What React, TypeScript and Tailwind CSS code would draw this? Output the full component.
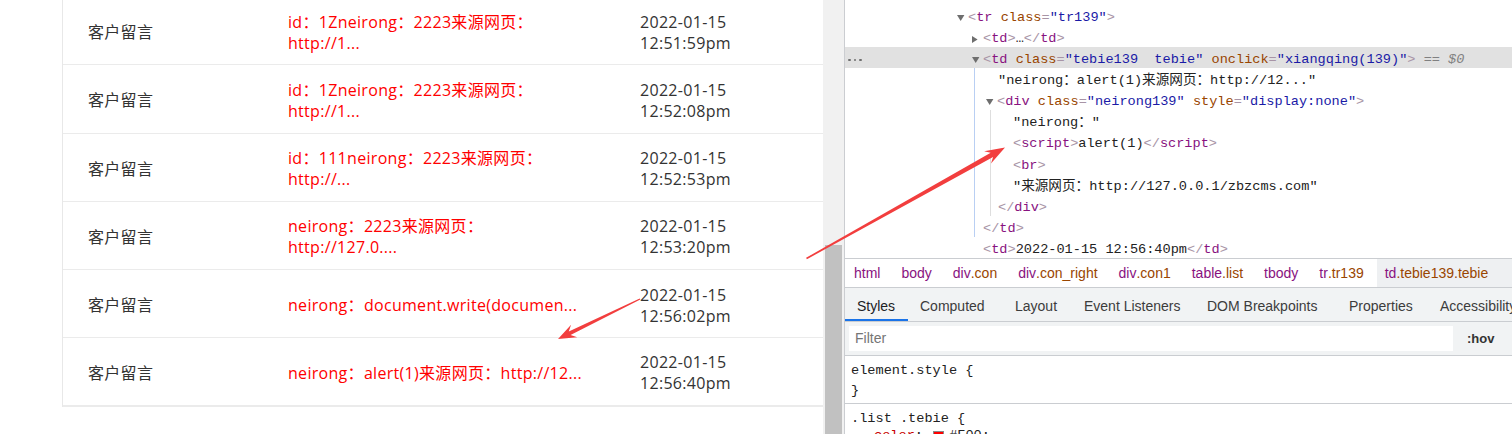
import React from "react";
import clsx from "clsx";

const rows = [
  { lines: ["id：1Zneirong：2223来源网页：", "http://1..."], time: "12:51:59pm" },
  { lines: ["id：1Zneirong：2223来源网页：", "http://1..."], time: "12:52:08pm" },
  { lines: ["id：111neirong：2223来源网页：", "http://..."], time: "12:52:53pm" },
  { lines: ["neirong：2223来源网页：", "http://127.0...."], time: "12:53:20pm" },
  { lines: ["neirong：document.write(documen..."], time: "12:56:02pm" },
  { lines: ["neirong：alert(1)来源网页：http://12..."], time: "12:56:40pm" },
];

const crumbs = [
  { tag: "html", cls: "" },
  { tag: "body", cls: "" },
  { tag: "div", cls: ".con" },
  { tag: "div", cls: ".con_right" },
  { tag: "div", cls: ".con1" },
  { tag: "table", cls: ".list" },
  { tag: "tbody", cls: "" },
  { tag: "tr", cls: ".tr139" },
  { tag: "td", cls: ".tebie139.tebie" },
];

const tabs = [
  { label: "Styles", w: "w-[63px]" },
  { label: "Computed", w: "w-[95px]" },
  { label: "Layout", w: "w-[69px]" },
  { label: "Event Listeners", w: "w-[123px]" },
  { label: "DOM Breakpoints", w: "w-[142px]" },
  { label: "Properties", w: "w-[91px]" },
  { label: "Accessibility", w: "w-[110px]" },
];

// dom tree token colours
const Br = ({ c }: { c: string }) => <span className="text-[#a894a6]">{c}</span>;
const Tg = ({ c }: { c: string }) => <span className="text-[#881280]">{c}</span>;
const An = ({ c }: { c: string }) => <span className="text-[#994500]">{c}</span>;
const Av = ({ c }: { c: string }) => <span className="text-[#1a1aa6]">{c}</span>;
const Tx = ({ c }: { c: string }) => <span className="text-[#222]">{c}</span>;

function Down() {
  return (
    <svg width="11" height="6" viewBox="0 0 11 6" className="shrink-0">
      <path d="M0 0H7.4L3.7 6Z" fill="#6e6e6e" />
    </svg>
  );
}

function Right() {
  return (
    <svg width="11" height="7" viewBox="0 0 11 7" className="shrink-0">
      <path d="M0 0L5.6 3.5L0 7Z" fill="#6e6e6e" />
    </svg>
  );
}

function Line({ className, children }: { className?: string; children: React.ReactNode }) {
  return <div className={clsx("h-[21.1px] pt-[5px] flex items-center whitespace-pre", className)}>{children}</div>;
}

export default function App() {
  return (
    <div className="relative w-[1512px] h-[434px] overflow-hidden flex bg-white">
      {/* page */}
      <div className="w-[823px] h-full overflow-hidden bg-white pl-[62px] font-['Open_Sans','Noto_Sans_CJK_SC',sans-serif] text-[16px] leading-[21px] tracking-[0.3px]">
        <div className="-mt-[3px] border-l border-[#e8e8e8]">
          {rows.map((r, i) => (
            <div
              key={i}
              className={clsx(
                "flex items-center h-[68.25px] pt-[4px] border-[#ebebeb] whitespace-nowrap",
                i === rows.length - 1 ? "border-b-2" : "border-b"
              )}
            >
              <div className="w-[225px] pl-[25px] text-[#333]">客户留言</div>
              <div className="w-[352px] text-[#ff0000]">
                {r.lines.map((l, j) => (
                  <div key={j}>{l}</div>
                ))}
              </div>
              <div className="text-[#333]">
                <div>2022-01-15</div>
                <div>{r.time}</div>
              </div>
            </div>
          ))}
        </div>
      </div>

      {/* scrollbar */}
      <div className="w-[21px] h-full bg-[#f1f1f1] flex flex-col pt-[245px] px-[2px]">
        <div className="flex-1 bg-[#c1c1c1]" />
      </div>

      {/* devtools */}
      <div className="flex-1 h-full border-l border-[#cbcdd1] flex flex-col overflow-hidden bg-white">
        {/* elements tree */}
        <div className="h-[258px] shrink-0 pt-[5px] overflow-hidden font-['Liberation_Mono','Noto_Sans_CJK_SC',monospace] text-[13.6px]">
          <Line className="pl-[112px]">
            <Down />
            <Br c="<" />
            <Tg c="tr" />
            <Tx c=" " />
            <An c="class" />
            <Br c="=" />
            <Av c={'"tr139"'} />
            <Br c=">" />
          </Line>
          <Line className="pl-[127px]">
            <Right />
            <Br c="<" />
            <Tg c="td" />
            <Br c=">" />
            <Tx c="…" />
            <Br c="</" />
            <Tg c="td" />
            <Br c=">" />
          </Line>
          <Line className="bg-[#e1e1e1]">
            <div className="w-[127px] pl-[3px] flex items-center gap-[3px]">
              <span className="w-[2.5px] h-[2.5px] rounded-full bg-[#6e6e6e]" />
              <span className="w-[2.5px] h-[2.5px] rounded-full bg-[#6e6e6e]" />
              <span className="w-[2.5px] h-[2.5px] rounded-full bg-[#6e6e6e]" />
            </div>
            <Down />
            <Br c="<" />
            <Tg c="td" />
            <Tx c=" " />
            <An c="class" />
            <Br c="=" />
            <Av c={'"tebie139  tebie"'} />
            <Tx c=" " />
            <An c="onclick" />
            <Br c="=" />
            <Av c={'"xiangqing(139)"'} />
            <Br c=">" />
            <span className="italic text-[#808080]"> == $0</span>
          </Line>

          <div className="ml-[129px] border-l border-[#b9cff3]">
            <Line className="pl-[23px]">
              <Tx c={'"neirong：alert(1)来源网页：http://12..."'} />
            </Line>
            <Line className="pl-[11px]">
              <Down />
              <Br c="<" />
              <Tg c="div" />
              <Tx c=" " />
              <An c="class" />
              <Br c="=" />
              <Av c={'"neirong139"'} />
              <Tx c=" " />
              <An c="style" />
              <Br c="=" />
              <Av c={'"display:none"'} />
              <Br c=">" />
            </Line>
            <div className="ml-[15px] border-l border-[#dedede]">
              <Line className="pl-[22px]">
                <Tx c={'"neirong："'} />
              </Line>
              <Line className="pl-[22px]">
                <Br c="<" />
                <Tg c="script" />
                <Br c=">" />
                <Tx c="alert(1)" />
                <Br c="</" />
                <Tg c="script" />
                <Br c=">" />
              </Line>
              <Line className="pl-[22px]">
                <Br c="<" />
                <Tg c="br" />
                <Br c=">" />
              </Line>
              <Line className="pl-[22px]">
                <Tx c={'"来源网页：http://127.0.0.1/zbzcms.com"'} />
              </Line>
              <Line className="pl-[7px]">
                <Br c="</" />
                <Tg c="div" />
                <Br c=">" />
              </Line>
            </div>
            <Line className="pl-[8px]">
              <Br c="</" />
              <Tg c="td" />
              <Br c=">" />
            </Line>
          </div>
          <Line className="pl-[138px]">
            <Br c="<" />
            <Tg c="td" />
            <Br c=">" />
            <Tx c="2022-01-15 12:56:40pm" />
            <Br c="</" />
            <Tg c="td" />
            <Br c=">" />
          </Line>
        </div>

        {/* breadcrumbs */}
        <div className="h-[30px] shrink-0 border-y border-[#cacdd1] flex pl-px gap-[5px] font-['Liberation_Sans',sans-serif] text-[14px] whitespace-nowrap">
          {crumbs.map((c, i) => (
            <div
              key={i}
              className={clsx("px-2 flex items-center", i === crumbs.length - 1 && "flex-1 bg-[#eef0f2]")}
            >
              <span className="text-[#881280]">{c.tag}</span>
              <span className="text-[#994500]">{c.cls}</span>
            </div>
          ))}
        </div>

        {/* tabs */}
        <div className="h-[34px] shrink-0 bg-[#f1f3f4] border-b border-[#cacdd1] flex font-['Liberation_Sans',sans-serif] text-[14px] whitespace-nowrap">
          {tabs.map((t, i) => (
            <div
              key={t.label}
              className={clsx(
                "relative shrink-0 pl-[12px] pt-[3px] flex items-center",
                t.w,
                i === 0 ? "text-[#202124]" : "text-[#3c3c3c]"
              )}
            >
              {t.label}
              {i === 0 && <div className="absolute left-0 right-0 bottom-0 h-[2px] bg-[#1a73e8]" />}
            </div>
          ))}
        </div>

        {/* filter */}
        <div className="h-[34px] shrink-0 bg-[#f1f3f4] border-b border-[#cacdd1] flex items-center px-1 font-['Liberation_Sans',sans-serif]">
          <div className="w-[604px] h-[25px] bg-white pl-[6px] flex items-center text-[14px] text-[#757575]">Filter</div>
          <div className="ml-[14px] text-[13px] font-bold text-[#333]">:hov</div>
        </div>

        {/* styles */}
        <div className="font-['Liberation_Mono','Noto_Sans_CJK_SC',monospace] text-[13.6px] leading-[20px] text-[#222] whitespace-pre">
          <div className="px-[6px] pt-[5px] pb-[2px] border-b border-[#cacdd1]">
            <div>element.style {"{"}</div>
            <div>{"}"}</div>
          </div>
          <div className="px-[6px] pt-[5px]">
            <div className="h-[17px]">.list .tebie {"{"}</div>
            <div className="pl-[23px] flex items-center">
              <span className="text-[#c80000]">color</span>
              <span>: </span>
              <span className="ml-[2px] mr-[5px] w-[11px] h-[11px] bg-[#ff0000] border border-[#8a8a8a]" />
              <span>#F00;</span>
            </div>
          </div>
        </div>
      </div>

      {/* annotation arrows */}
      <svg className="absolute inset-0 pointer-events-none" width="1512" height="434" viewBox="0 0 1512 434">
        <polygon
          points="806.9,259.2 993.1,157 991,163.4 1005,147.5 984.1,151.2 990.7,152.7 806.1,257.8"
          fill="#f23e3e"
        />
        <polygon
          points="640.3,299.6 570.55,335.08 577.24,337.37 558,339 571.08,324.79 568.79,331.48 639.7,298.4"
          fill="#f23e3e"
        />
      </svg>
    </div>
  );
}
